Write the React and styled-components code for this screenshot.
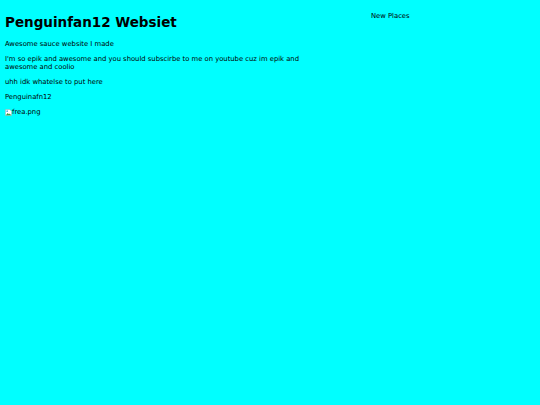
import React from 'react';
import styled, { createGlobalStyle } from 'styled-components';

const GlobalStyle = createGlobalStyle`
  html, body {
    margin: 0;
    padding: 0;
    background: #00ffff;
  }
  body {
    font-family: "DejaVu Sans", Verdana, sans-serif;
    color: #000;
    min-height: 405px;
  }
`;

const Page = styled.div`
  display: flex;
  align-items: flex-start;
  padding: 6px 5px 5px;
`;

const Main = styled.main`
  width: 300px;
`;

const Title = styled.h1`
  font-size: 13.5px;
  margin: 8px 0 10px;
`;

const Text = styled.p`
  display: ${(p) => (p.$inline ? 'flex' : 'block')};
  align-items: center;
  font-size: 6.8px;
  line-height: 8px;
  margin: ${(p) => (p.$inline ? '6px 0' : '7px 0')};
`;

const Side = styled.aside`
  margin-left: 66px;
`;

const SideText = styled.p`
  font-size: 6.8px;
  line-height: 8px;
  margin: 6px 0;
`;

const BrokenIcon = () => (
  <svg width="7" height="7" viewBox="0 0 16 16">
    <path d="M1 1h10l4 4v10H1z" fill="#fff" stroke="#999" strokeWidth="1" />
    <path d="M2 14l4-5 3 3 2-2 3 4z" fill="#3a9a3a" />
    <circle cx="5" cy="5" r="2" fill="#5aa0e0" />
  </svg>
);

export default function App() {
  return (
    <>
      <GlobalStyle />
      <Page>
        <Main>
          <Title>Penguinfan12 Websiet</Title>
          <Text>Awesome sauce website I made</Text>
          <Text>
            I'm so epik and awesome and you should subscirbe to me on youtube cuz im epik and awesome and coolio
          </Text>
          <Text>uhh idk whatelse to put here</Text>
          <Text>Penguinafn12</Text>
          <Text $inline>
            <BrokenIcon />
            frea.png
          </Text>
        </Main>
        <Side>
          <SideText>New Places</SideText>
        </Side>
      </Page>
    </>
  );
}
